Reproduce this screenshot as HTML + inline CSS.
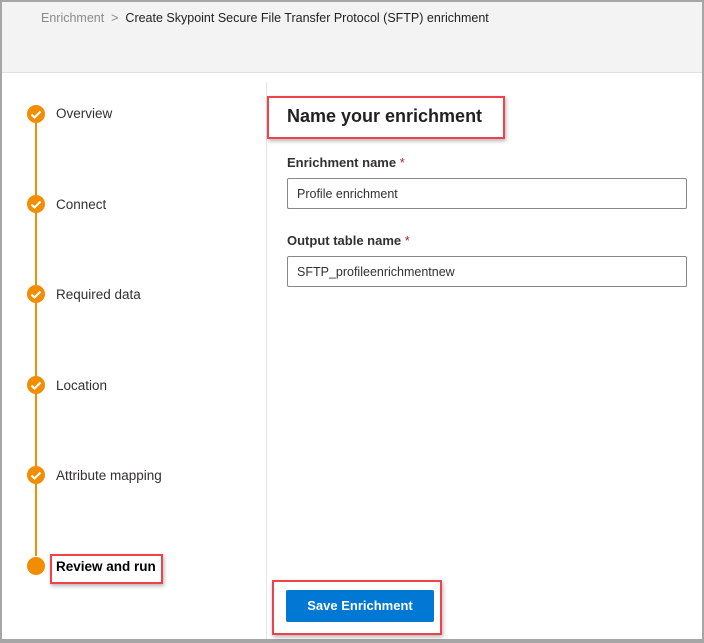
<!DOCTYPE html><html><head><style>
body{margin:0;width:704px;height:641px;overflow:hidden;font-family:"Liberation Sans",sans-serif;background:#fff}
.frame{position:absolute;left:0;top:0;width:700px;height:637px;border:2px solid #a6a6a6;border-bottom-width:4px;box-sizing:content-box}
.head{position:absolute;left:0;top:0;width:700px;height:70px;background:#f3f3f3;border-bottom:1px solid #e1e1e1}
.bc{position:absolute;left:39px;top:9px;font-size:12.5px;color:#222}
.bc span{color:#8a8a8a}
.div{position:absolute;left:264px;top:80px;width:1px;height:557px;background:#e6e6e6}
.step{position:absolute;left:54px;font-size:13.5px;color:#323130}
.line{position:absolute;left:33px;width:2px;background:#f28c00}
.red{position:absolute;border:2px solid #f0424a;box-shadow:1px 2px 4px rgba(0,0,0,.3)}
.lbl{position:absolute;left:285px;font-size:13px;font-weight:bold;color:#323130}
.lbl b{color:#a4262c;font-weight:normal}
.in{position:absolute;left:285px;width:400px;height:31px;border:1px solid #8a8886;border-radius:2px;box-sizing:border-box;padding:8px 9px;font-size:12.5px;color:#323130}
</style></head><body>
<div class="frame">
<div class="head"><div class="bc"><span>Enrichment &nbsp;&gt;</span>&nbsp; Create Skypoint Secure File Transfer Protocol (SFTP) enrichment</div></div>
<div class="div"></div>
<div class="line" style="top:120px;height:434px"></div>
<svg style="position:absolute;left:0;top:0" width="60" height="580">
<g fill="#f28c00"><circle cx="34" cy="112" r="9"/><circle cx="34" cy="202" r="9"/><circle cx="34" cy="292" r="9"/><circle cx="34" cy="383" r="9"/><circle cx="34" cy="473" r="9"/><circle cx="34" cy="564" r="9"/></g>
<g stroke="#fff" stroke-width="2.2" fill="none"><path d="M29.5 112.5l3 3 6-6"/><path d="M29.5 202.5l3 3 6-6"/><path d="M29.5 292.5l3 3 6-6"/><path d="M29.5 383.5l3 3 6-6"/><path d="M29.5 473.5l3 3 6-6"/></g></svg>
<div class="step" style="top:104px">Overview</div>
<div class="step" style="top:195px">Connect</div>
<div class="step" style="top:285px">Required data</div>
<div class="step" style="top:376px">Location</div>
<div class="step" style="top:466px">Attribute mapping</div>
<div class="step" style="top:557px;font-weight:bold;color:#000">Review and run</div>
<div class="red" style="left:48px;top:552px;width:109px;height:26px"></div>
<div style="position:absolute;left:285px;top:104px;font-size:18px;font-weight:bold;color:#222">Name your enrichment</div>
<div class="red" style="left:265px;top:94px;width:234px;height:39px"></div>
<div class="lbl" style="top:153px">Enrichment name <b>*</b></div>
<div class="in" style="top:176px">Profile enrichment</div>
<div class="lbl" style="top:231px">Output table name <b>*</b></div>
<div class="in" style="top:254px">SFTP_profileenrichmentnew</div>
<div style="position:absolute;left:284px;top:588px;width:148px;height:32px;background:#0078d4;border-radius:2px;color:#fff;font-weight:bold;font-size:13px;text-align:center;line-height:32px">Save Enrichment</div>
<div class="red" style="left:270px;top:578px;width:166px;height:51px"></div>
</div>
</body></html>
